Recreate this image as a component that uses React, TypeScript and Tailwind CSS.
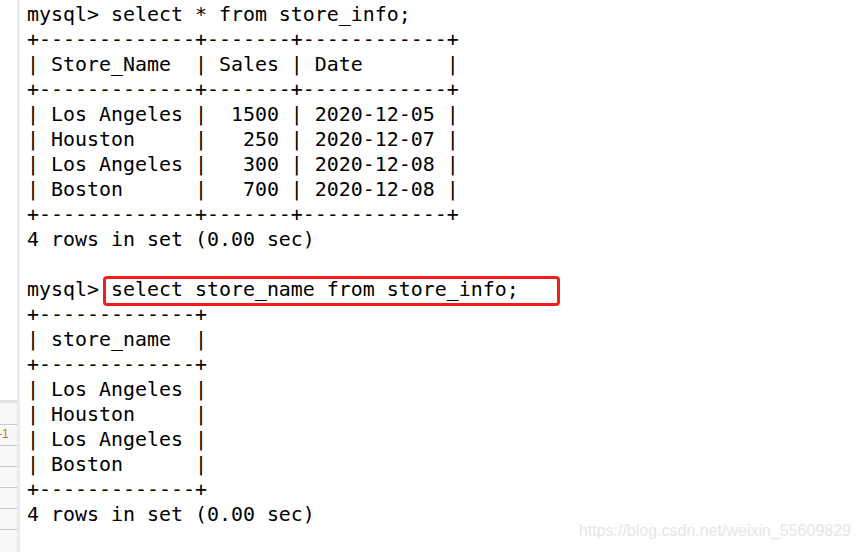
const lines = [
  "mysql> select * from store_info;",
  "+-------------+-------+------------+",
  "| Store_Name  | Sales | Date       |",
  "+-------------+-------+------------+",
  "| Los Angeles |  1500 | 2020-12-05 |",
  "| Houston     |   250 | 2020-12-07 |",
  "| Los Angeles |   300 | 2020-12-08 |",
  "| Boston      |   700 | 2020-12-08 |",
  "+-------------+-------+------------+",
  "4 rows in set (0.00 sec)",
  "",
  "mysql> select store_name from store_info;",
  "+-------------+",
  "| store_name  |",
  "+-------------+",
  "| Los Angeles |",
  "| Houston     |",
  "| Los Angeles |",
  "| Boston      |",
  "+-------------+",
  "4 rows in set (0.00 sec)",
];

export default function App() {
  return (
    <div className="relative flex w-[861px] h-[552px] overflow-hidden bg-white">
      {/* 左侧结果面板残影 */}
      <div className="flex flex-col w-[17px] shrink-0">
        <div className="h-[400px] bg-white"></div>
        <div className="h-[3px] bg-[#e3e3e3]"></div>
        <div className="relative flex-1 bg-[#f7f7f7]">
          <div className="absolute left-0 top-[31px] w-[2px] h-px bg-[#c0782c]"></div>
          <span className="absolute left-[2px] top-[25px] text-[12px] leading-[13px] text-[#c0782c] font-['Liberation_Sans',sans-serif]">
            1
          </span>
          {[21, 42, 63, 84, 105, 126].map((t) => (
            <div key={t} className="absolute left-0 right-0 h-px bg-[#c8c8c8]" style={{ top: t }}></div>
          ))}
        </div>
      </div>
      <div className="w-[3px] shrink-0 bg-[#ececec]"></div>

      <pre className="pl-[7px] pt-[2px] m-0 text-[19.93px] leading-[25px] text-black font-['DejaVu_Sans_Mono',monospace] whitespace-pre">
        {lines.map((l, i) => (
          <div key={i} className="h-[25px]">{l}</div>
        ))}
      </pre>

      {/* 红色标注框 */}
      <div className="absolute left-[103px] top-[276px] w-[457px] h-[30px] border-[3px] border-[#f41c1c] rounded-[4px]"></div>

      <div className="absolute right-[10px] bottom-[9px] text-[16px] text-[#e6e6e6] font-['Liberation_Sans',sans-serif]">
        https://blog.csdn.net/weixin_55609829
      </div>
    </div>
  );
}
